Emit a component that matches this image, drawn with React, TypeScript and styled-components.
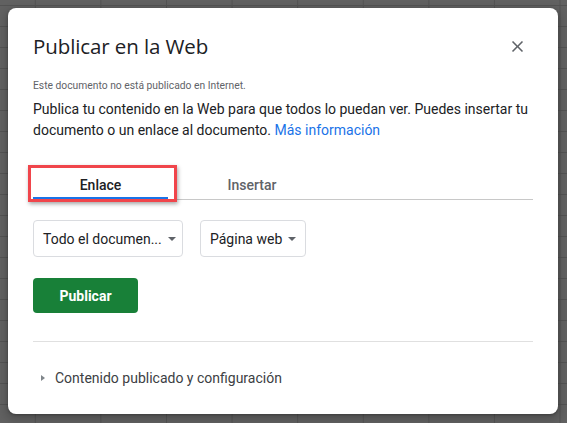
import React from 'react';
import styled, { createGlobalStyle } from 'styled-components';

const GlobalStyle = createGlobalStyle`
  html, body {
    margin: 0;
    padding: 0;
  }
  body {
    width: 567px;
    height: 423px;
    overflow: hidden;
    font-family: Roboto, "Liberation Sans", Arial, sans-serif;
    background-color: #616161;
    background-image:
      repeating-linear-gradient(to right, transparent 0, transparent 34.5px, #535353 34.5px, #535353 35.5px, transparent 35.5px, transparent 65.6px),
      repeating-linear-gradient(to bottom, transparent 0, transparent 5.5px, #535353 5.5px, #535353 6.5px, transparent 6.5px, transparent 21px);
    background-size: 65.6px 100%, 100% 21px;
  }
`;

const Page = styled.div`
  width: 567px;
  height: 423px;
  padding: 8px 9px 9px 8px;
  box-sizing: border-box;
`;

const Dialog = styled.div`
  width: 550px;
  height: 406px;
  background: #fff;
  border-radius: 8px;
  box-shadow: 0 4px 8px 3px rgba(0, 0, 0, 0.15), 0 1px 3px rgba(0, 0, 0, 0.3);
  padding: 24px 25px 0 25px;
  box-sizing: border-box;
  display: flex;
  flex-direction: column;
`;

const Header = styled.div`
  display: flex;
  align-items: center;
  justify-content: space-between;
  height: 28px;
`;

const Title = styled.h1`
  margin: 0;
  font-family: "Open Sans", Roboto, sans-serif;
  font-weight: 400;
  font-size: 20.5px;
  line-height: 28px;
  color: #202124;
  letter-spacing: -0.1px;
`;

const CloseButton = styled.button`
  border: none;
  background: none;
  padding: 0;
  margin-right: 6px;
  width: 19px;
  height: 19px;
  display: flex;
  align-items: center;
  justify-content: center;
  color: #5f6368;
  cursor: pointer;
`;

const Status = styled.div`
  margin-top: 18px;
  font-size: 10.3px;
  line-height: 16px;
  color: #5f6368;
`;

const Intro = styled.p`
  margin: 5px 0 0 0;
  font-size: 14px;
  line-height: 21px;
  color: #202124;
`;

const Link = styled.a`
  color: #1a73e8;
  text-decoration: none;
`;

const TabRow = styled.div`
  position: relative;
  margin-top: 29px;
  display: flex;
  border-bottom: 1px solid #c8c8c8;
  height: 29px;
`;

const Tab = styled.div<{ active?: boolean; width: number }>`
  position: relative;
  width: ${(p) => p.width}px;
  display: flex;
  align-items: center;
  justify-content: center;
  font-size: 14px;
  font-weight: 500;
  color: ${(p) => (p.active ? '#202124' : '#5f6368')};
  &::after {
    content: '';
    display: ${(p) => (p.active ? 'block' : 'none')};
    position: absolute;
    left: 0;
    right: 0;
    bottom: -1px;
    height: 3px;
    background: #1a73e8;
  }
`;

const Highlight = styled.div`
  position: absolute;
  left: -5px;
  top: -5px;
  width: 149px;
  height: 37px;
  box-sizing: border-box;
  border: 3px solid #f0454b;
  box-shadow: 1px 2px 4px rgba(0, 0, 0, 0.35);
  pointer-events: none;
`;

const SelectRow = styled.div`
  margin-top: 20px;
  display: flex;
  gap: 17px;
`;

const Select = styled.div<{ width: number }>`
  width: ${(p) => p.width}px;
  height: 37px;
  box-sizing: border-box;
  border: 1px solid #dadce0;
  border-radius: 4px;
  display: flex;
  align-items: center;
  justify-content: space-between;
  padding: 0 9px 0 9px;
  font-size: 14px;
  color: #202124;
  white-space: nowrap;
`;

const Caret = styled.span`
  flex-shrink: 0;
  width: 0;
  height: 0;
  border-left: 4px solid transparent;
  border-right: 4px solid transparent;
  border-top: 4px solid #5f6368;
  margin-left: 6px;
`;

const PublishButton = styled.button`
  margin-top: 21px;
  width: 105px;
  height: 35px;
  border: none;
  border-radius: 4px;
  background: #188038;
  color: #fff;
  font-family: Roboto, sans-serif;
  font-size: 14px;
  font-weight: 700;
  cursor: pointer;
`;

const Divider = styled.hr`
  margin: 28px 0 0 0;
  border: none;
  border-top: 1px solid #e0e0e0;
`;

const Expander = styled.div`
  margin-top: 26px;
  display: flex;
  align-items: center;
  font-size: 14px;
  line-height: 20px;
  color: #3c4043;
`;

const ExpandArrow = styled.span`
  width: 0;
  height: 0;
  border-top: 3.5px solid transparent;
  border-bottom: 3.5px solid transparent;
  border-left: 4px solid #80868b;
  margin: 0 10px 0 8px;
`;

const App = () => {
  return (
    <>
      <GlobalStyle />
      <Page>
        <Dialog>
          <Header>
            <Title>Publicar en la Web</Title>
            <CloseButton aria-label="Cerrar">
              <svg width="19" height="19" viewBox="0 0 24 24" fill="currentColor">
                <path d="M19 6.41L17.59 5 12 10.59 6.41 5 5 6.41 10.59 12 5 17.59 6.41 19 12 13.41 17.59 19 19 17.59 13.41 12z" />
              </svg>
            </CloseButton>
          </Header>
          <Status>Este documento no está publicado en Internet.</Status>
          <Intro>
            Publica tu contenido en la Web para que todos lo puedan ver. Puedes insertar tu documento o un enlace al
            documento. <Link href="#">Más información</Link>
          </Intro>
          <TabRow>
            <Tab active width={135}>Enlace</Tab>
            <Tab width={168}>Insertar</Tab>
            <Highlight />
          </TabRow>
          <SelectRow>
            <Select width={150}>
              Todo el documen...
              <Caret />
            </Select>
            <Select width={106}>
              Página web
              <Caret />
            </Select>
          </SelectRow>
          <PublishButton>Publicar</PublishButton>
          <Divider />
          <Expander>
            <ExpandArrow />
            Contenido publicado y configuración
          </Expander>
        </Dialog>
      </Page>
    </>
  );
};

export default App;
